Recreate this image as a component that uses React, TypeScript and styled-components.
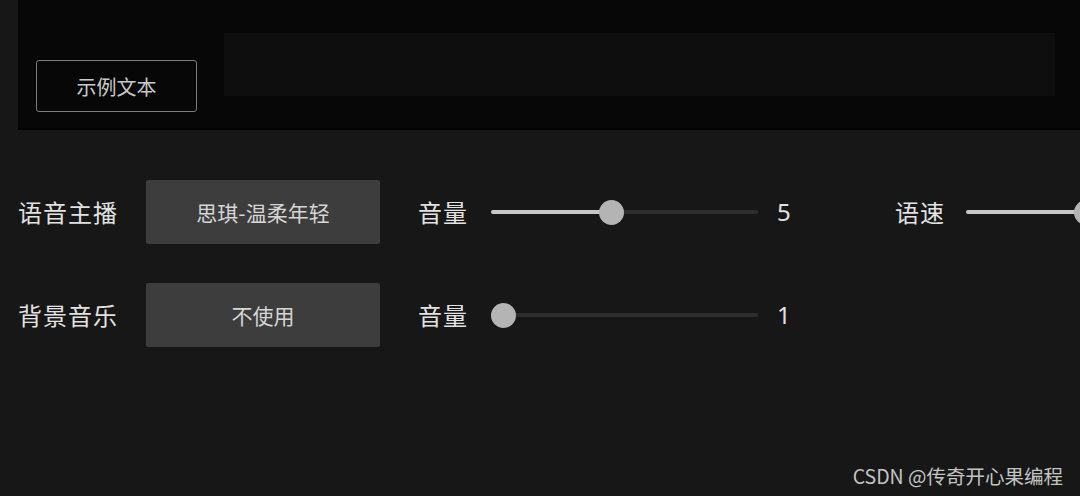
import React from "react";
import styled, { createGlobalStyle } from "styled-components";

const Global = createGlobalStyle`
  html, body {
    margin: 0;
    padding: 0;
    background: #171717;
    width: 1080px;
    height: 496px;
    overflow: hidden;
  }
  body {
    font-family: "Noto Sans CJK SC", "Noto Sans", sans-serif;
  }
`;

const Page = styled.div`
  position: relative;
  width: 1080px;
  height: 496px;
  background: #171717;
  overflow: hidden;
`;

const Preview = styled.div`
  margin-left: 18px;
  height: 128px;
  background: #070707;
  border-bottom: 2px solid #030303;
  display: flex;
  align-items: flex-start;
  padding-left: 18px;
  gap: 27px;
`;

const SampleButton = styled.button`
  margin-top: 60px;
  width: 161px;
  height: 52px;
  background: transparent;
  border: 1px solid #7d7d7d;
  border-radius: 3px;
  color: #c9c9c9;
  font-family: "Noto Sans CJK SC", sans-serif;
  font-size: 20px;
  padding: 0;
`;

const TextArea = styled.div`
  margin-top: 33px;
  width: 831px;
  height: 63px;
  background: #0e0e0e;
`;

const Controls = styled.div`
  display: flex;
  flex-direction: column;
  gap: 39px;
  padding: 50px 0 0 18px;
`;

const Row = styled.div`
  display: flex;
  align-items: center;
  height: 64px;
  white-space: nowrap;
`;

const Label = styled.span<{ $w: number; $mr: number }>`
  width: ${(p) => p.$w}px;
  margin-right: ${(p) => p.$mr}px;
  flex-shrink: 0;
  color: #e2e2e2;
  font-size: 24px;
  letter-spacing: 1px;
  line-height: 1;
`;

const Select = styled.div`
  width: 234px;
  height: 64px;
  margin-right: 38px;
  flex-shrink: 0;
  background: #3d3d3d;
  border-radius: 2px;
  display: flex;
  align-items: center;
  justify-content: center;
  color: #d6d6d6;
  font-size: 21px;
`;

const SliderBox = styled.div`
  position: relative;
  width: 267px;
  height: 25px;
  flex-shrink: 0;
`;

const Track = styled.div`
  position: absolute;
  left: 0;
  right: 0;
  top: 10px;
  height: 4px;
  border-radius: 2px;
  background: #2d2d2d;
`;

const Fill = styled.div`
  position: absolute;
  left: 0;
  top: 10px;
  height: 4px;
  border-radius: 2px;
  background: #c8c8c8;
`;

const Thumb = styled.div`
  position: absolute;
  top: 0;
  width: 25px;
  height: 25px;
  border-radius: 50%;
  background: #b4b4b4;
`;

const Value = styled.span`
  width: 118px;
  margin-left: 19px;
  flex-shrink: 0;
  color: #e2e2e2;
  font-family: "Noto Sans", "Noto Sans CJK SC", sans-serif;
  font-size: 24px;
  line-height: 1;
`;

const Watermark = styled.div`
  position: absolute;
  right: 17px;
  bottom: 6px;
  color: #c4c4c4;
  font-family: "Noto Sans CJK SC", sans-serif;
  font-size: 19.5px;
`;

function Slider({ value, min, max }: { value: number; min: number; max: number }) {
  const travel = 267 - 25;
  const pos = ((value - min) / (max - min)) * travel;
  return (
    <SliderBox>
      <Track />
      <Fill style={{ width: pos + 12 }} />
      <Thumb style={{ left: pos }} />
    </SliderBox>
  );
}

export default function App() {
  return (
    <Page>
      <Global />
      <Preview>
        <SampleButton>示例文本</SampleButton>
        <TextArea />
      </Preview>
      <Controls>
        <Row>
          <Label $w={100} $mr={28}>语音主播</Label>
          <Select>思琪-温柔年轻</Select>
          <Label $w={52} $mr={21}>音量</Label>
          <Slider value={5} min={1} max={10} />
          <Value>5</Value>
          <Label $w={50} $mr={21}>语速</Label>
          <Slider value={5} min={1} max={10} />
        </Row>
        <Row>
          <Label $w={100} $mr={28}>背景音乐</Label>
          <Select>不使用</Select>
          <Label $w={52} $mr={21}>音量</Label>
          <Slider value={1} min={1} max={10} />
          <Value>1</Value>
        </Row>
      </Controls>
      <Watermark>CSDN @传奇开心果编程</Watermark>
    </Page>
  );
}
